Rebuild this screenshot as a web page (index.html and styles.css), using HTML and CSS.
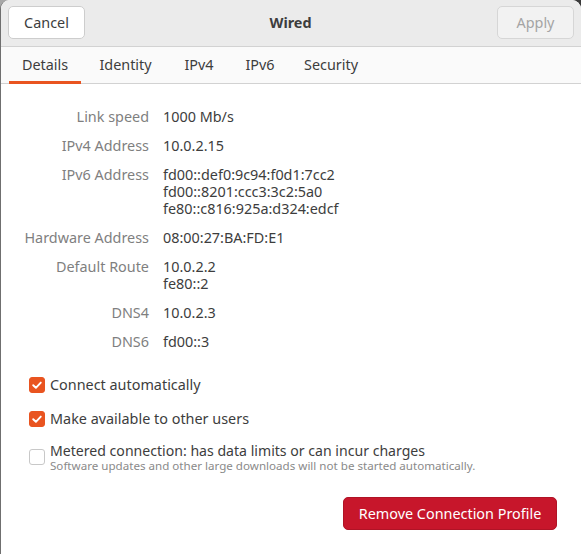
FILE: index.html
```html
<!DOCTYPE html>
<html>
<head>
<meta charset="utf-8">
<link rel="stylesheet" href="styles.css">
</head>
<body>
<div class="window">
  <header class="headerbar">
    <button class="btn btn-cancel">Cancel</button>
    <div class="title">Wired</div>
    <button class="btn btn-apply" disabled>Apply</button>
  </header>
  <nav class="tabs">
    <div class="tab active">Details</div>
    <div class="tab">Identity</div>
    <div class="tab">IPv4</div>
    <div class="tab">IPv6</div>
    <div class="tab">Security</div>
  </nav>
  <main class="content">
    <div class="details">
      <div class="label">Link speed</div>
      <div class="value"><div class="line">1000 Mb/s</div></div>
      <div class="label">IPv4 Address</div>
      <div class="value"><div class="line">10.0.2.15</div></div>
      <div class="label">IPv6 Address</div>
      <div class="value">
        <div class="line">fd00::def0:9c94:f0d1:7cc2</div>
        <div class="line">fd00::8201:ccc3:3c2:5a0</div>
        <div class="line">fe80::c816:925a:d324:edcf</div>
      </div>
      <div class="label">Hardware Address</div>
      <div class="value"><div class="line">08:00:27:BA:FD:E1</div></div>
      <div class="label">Default Route</div>
      <div class="value">
        <div class="line">10.0.2.2</div>
        <div class="line">fe80::2</div>
      </div>
      <div class="label">DNS4</div>
      <div class="value"><div class="line">10.0.2.3</div></div>
      <div class="label">DNS6</div>
      <div class="value"><div class="line">fd00::3</div></div>
    </div>
    <div class="options">
      <label class="check">
        <span class="box checked"><svg viewBox="0 0 16 16" width="16" height="16"><path d="M4.2 8.2 L6.9 10.8 L11.8 5.6" fill="none" stroke="#fff" stroke-width="1.9" stroke-linecap="round" stroke-linejoin="round"/></svg></span>
        <span class="check-text">Connect automatically</span>
      </label>
      <label class="check">
        <span class="box checked"><svg viewBox="0 0 16 16" width="16" height="16"><path d="M4.2 8.2 L6.9 10.8 L11.8 5.6" fill="none" stroke="#fff" stroke-width="1.9" stroke-linecap="round" stroke-linejoin="round"/></svg></span>
        <span class="check-text">Make available to other users</span>
      </label>
      <label class="check metered">
        <span class="box"></span>
        <span class="check-col">
          <span class="check-text">Metered connection: has data limits or can incur charges</span>
          <span class="check-sub">Software updates and other large downloads will not be started automatically.</span>
        </span>
      </label>
    </div>
    <div class="actions">
      <button class="btn btn-remove">Remove Connection Profile</button>
    </div>
  </main>
</div>
</body>
</html>
```

FILE: styles.css
```css
html, body {
  margin: 0;
  padding: 0;
}
body {
  width: 581px;
  height: 554px;
  overflow: hidden;
  background: linear-gradient(to right, #a8a8a8, #3a3a3a);
  font-family: "Noto Sans", "DejaVu Sans", sans-serif;
  font-size: 14.4px;
  color: #3d3d3d;
}
.window {
  height: 554px;
  background: #ffffff;
  border-left: 1px solid #6f6f6f;
  border-radius: 9px 9px 0 0;
  overflow: hidden;
  display: flex;
  flex-direction: column;
}
.headerbar {
  height: 45px;
  padding: 0 7px 1px 7px;
  flex: none;
  background: #ebebeb;
  border-bottom: 1px solid #d2d2d2;
  display: flex;
  align-items: center;
  justify-content: space-between;
}
.btn {
  font-family: inherit;
  font-size: 14.4px;
  border-radius: 5px;
  cursor: default;
}
.btn-cancel {
  width: 77px;
  height: 33px;
  background: #ffffff;
  border: 1px solid #cdcdcd;
  color: #3d3d3d;
  padding: 0;
}
.btn-apply {
  width: 77px;
  height: 33px;
  background: #f2f2f2;
  border: 1px solid #d6d6d6;
  color: #a4a4a4;
  padding: 0;
}
.title {
  font-weight: bold;
  font-size: 14.4px;
  color: #3d3d3d;
  padding-right: 1px;
}
.tabs {
  height: 34px;
  padding: 0 0 2px 8px;
  flex: none;
  background: #fafafa;
  border-bottom: 1px solid #d2d2d2;
  display: flex;
}
.tab {
  position: relative;
  display: flex;
  align-items: center;
  justify-content: center;
  color: #3d3d3d;
  font-size: 14.4px;
}
.tab:nth-child(1) { width: 72px; }
.tab:nth-child(2) { width: 79px; margin-left: 5px; }
.tab:nth-child(3) { width: 46px; margin-left: 11px; }
.tab:nth-child(4) { width: 46px; margin-left: 15px; }
.tab:nth-child(5) { width: 68px; margin-left: 14px; }
.tab.active::after {
  content: "";
  position: absolute;
  left: 0;
  right: 0;
  bottom: -3px;
  height: 3px;
  background: #e95420;
}
.content {
  flex: 1;
  background: #ffffff;
  padding-top: 24px;
}
.details {
  display: grid;
  grid-template-columns: 148px auto;
  column-gap: 14px;
  row-gap: 12px;
  line-height: 17px;
}
.label {
  text-align: right;
  color: #7f7f7f;
  height: 17px;
}
.value {
  color: #3d3d3d;
}
.line {
  height: 17px;
  white-space: nowrap;
}
.options {
  margin-top: 26px;
  padding-left: 28px;
  display: flex;
  flex-direction: column;
  gap: 16px;
}
.check {
  display: flex;
  align-items: center;
  gap: 5px;
  height: 18px;
  line-height: 18px;
  color: #3d3d3d;
}
.box {
  width: 16px;
  height: 16px;
  box-sizing: border-box;
  border-radius: 3px;
  border: 1px solid #c8c8c8;
  background: #ffffff;
  flex: none;
  display: flex;
}
.box.checked {
  background: #e95420;
  border-color: #e95420;
}
.box svg {
  margin: -1px;
}
.check.metered {
  align-items: flex-start;
  height: auto;
  margin-top: -2px;
}
.check.metered .box {
  margin-top: 7px;
}
.check-col {
  display: flex;
  flex-direction: column;
}
.check-col .check-text {
  font-size: 14.1px;
  line-height: 17px;
  height: 17px;
}
.check-sub {
  font-size: 11.6px;
  color: #8a8a8a;
  line-height: 14px;
  height: 14px;
}
.actions {
  display: flex;
  justify-content: flex-end;
  padding-right: 24px;
  margin-top: 24px;
}
.btn-remove {
  width: 214px;
  height: 33px;
  background: #c7162b;
  border: 1px solid #b01326;
  color: #ffffff;
  padding: 0;
}
```
